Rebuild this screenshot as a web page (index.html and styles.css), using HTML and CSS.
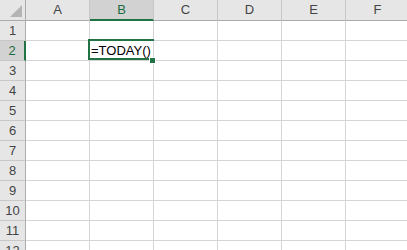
FILE: index.html
```html
<!DOCTYPE html>
<html>
<head>
    <title>Sheet1</title>
    <link rel="stylesheet" href="styles.css">
</head>
<body>
    <div class="sheet">
        <div class="corner"><span class="corner-tri"></span></div>
        <div class="col-head">A</div>
        <div class="col-head active">B</div>
        <div class="col-head">C</div>
        <div class="col-head">D</div>
        <div class="col-head">E</div>
        <div class="col-head">F</div>

        <div class="row-head">1</div>
        <div class="cell"></div><div class="cell"></div><div class="cell"></div><div class="cell"></div><div class="cell"></div><div class="cell"></div>

        <div class="row-head active">2</div>
        <div class="cell"></div>
        <div class="cell selected"><span class="value">=TODAY()</span><span class="sel-box"></span><span class="handle"></span></div>
        <div class="cell"></div><div class="cell"></div><div class="cell"></div><div class="cell"></div>

        <div class="row-head">3</div>
        <div class="cell"></div><div class="cell"></div><div class="cell"></div><div class="cell"></div><div class="cell"></div><div class="cell"></div>
        <div class="row-head">4</div>
        <div class="cell"></div><div class="cell"></div><div class="cell"></div><div class="cell"></div><div class="cell"></div><div class="cell"></div>
        <div class="row-head">5</div>
        <div class="cell"></div><div class="cell"></div><div class="cell"></div><div class="cell"></div><div class="cell"></div><div class="cell"></div>
        <div class="row-head">6</div>
        <div class="cell"></div><div class="cell"></div><div class="cell"></div><div class="cell"></div><div class="cell"></div><div class="cell"></div>
        <div class="row-head">7</div>
        <div class="cell"></div><div class="cell"></div><div class="cell"></div><div class="cell"></div><div class="cell"></div><div class="cell"></div>
        <div class="row-head">8</div>
        <div class="cell"></div><div class="cell"></div><div class="cell"></div><div class="cell"></div><div class="cell"></div><div class="cell"></div>
        <div class="row-head">9</div>
        <div class="cell"></div><div class="cell"></div><div class="cell"></div><div class="cell"></div><div class="cell"></div><div class="cell"></div>
        <div class="row-head">10</div>
        <div class="cell"></div><div class="cell"></div><div class="cell"></div><div class="cell"></div><div class="cell"></div><div class="cell"></div>
        <div class="row-head">11</div>
        <div class="cell"></div><div class="cell"></div><div class="cell"></div><div class="cell"></div><div class="cell"></div><div class="cell"></div>
        <div class="row-head">12</div>
        <div class="cell"></div><div class="cell"></div><div class="cell"></div><div class="cell"></div><div class="cell"></div><div class="cell"></div>
    </div>
</body>
</html>
```

FILE: styles.css
```css
/* Spreadsheet grid */
body {
    margin: 0;
    padding: 0;
    background-color: #fff;
    font-family: "Liberation Sans", Arial, sans-serif;
    overflow: hidden;
}

.sheet {
    display: grid;
    grid-template-columns: 26px repeat(6, 64px);
    grid-template-rows: 21px repeat(12, 20px);
    width: 410px;
}

.corner,
.col-head,
.row-head,
.cell {
    box-sizing: border-box;
}

.corner {
    position: relative;
    background-color: #e6e6e6;
    border-right: 1px solid #ababab;
    border-bottom: 1px solid #ababab;
}

.corner-tri {
    position: absolute;
    right: 3px;
    bottom: 3px;
    width: 0;
    height: 0;
    border-left: 12px solid transparent;
    border-bottom: 12px solid #b4b4b4;
}

.col-head {
    background-color: #e6e6e6;
    border-right: 1px solid #c8c8c8;
    border-bottom: 1px solid #ababab;
    color: #444;
    font-size: 13px;
    line-height: 20px;
    text-align: center;
}

.col-head.active {
    background-color: #d2d2d2;
    color: #1e6b41;
    border-bottom: 2px solid #217346;
}

.row-head {
    background-color: #e6e6e6;
    border-right: 1px solid #ababab;
    border-bottom: 1px solid #c8c8c8;
    color: #444;
    font-size: 13px;
    line-height: 20px;
    text-align: center;
}

.row-head.active {
    background-color: #d2d2d2;
    color: #1e6b41;
    border-right: 2px solid #217346;
}

.cell {
    border-right: 1px solid #d4d4d4;
    border-bottom: 1px solid #d4d4d4;
}

.cell.selected {
    position: relative;
    overflow: visible;
    z-index: 2;
}

.value {
    position: relative;
    z-index: 3;
    display: block;
    padding-left: 1px;
    font-size: 13px;
    line-height: 19px;
    color: #000;
    white-space: nowrap;
}

/* edit mode: the box has no right edge, text runs over it */
.sel-box {
    position: absolute;
    left: -2px;
    top: -2px;
    right: -1px;
    bottom: 0;
    border: 2px solid #217346;
    border-right: none;
}

.handle {
    position: absolute;
    right: -3px;
    bottom: -4px;
    width: 5px;
    height: 5px;
    background-color: #217346;
    border: 1px solid #fff;
    z-index: 4;
}
```
